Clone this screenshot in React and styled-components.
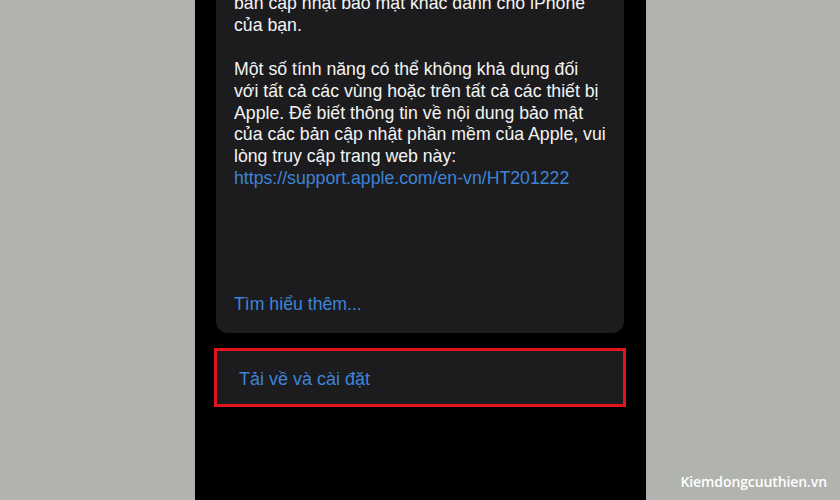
import React from 'react';
import styled, { createGlobalStyle } from 'styled-components';

const GlobalStyle = createGlobalStyle`
  html, body {
    margin: 0;
    padding: 0;
    background: #b1b3ae;
  }
  body {
    font-family: 'Liberation Sans', Arial, sans-serif;
  }
`;

const Page = styled.div`
  position: relative;
  width: 840px;
  height: 500px;
  background: #b1b3ae;
  display: flex;
  justify-content: center;
  overflow: hidden;
`;

const Screen = styled.div`
  width: 451px;
  height: 500px;
  margin-left: 1px;
  background: #000;
  display: flex;
  flex-direction: column;
  overflow: hidden;
`;

const Card = styled.div`
  margin: -20px 22px 0 21px;
  padding: 13px 18px 17px 18px;
  background: #1c1c1e;
  border-radius: 0 0 12px 12px;
  color: #f4f4f4;
  font-size: 17.7px;
  line-height: 21.9px;
`;

const Para = styled.p`
  margin: 0 0 21.9px 0;
  &:last-of-type {
    margin-bottom: 0;
  }
`;

const Link = styled.a`
  color: #3d84d8;
  text-decoration: none;
  display: block;
  margin-top: ${({ $gap }) => $gap || 0}px;
`;

const Action = styled.div`
  margin: 15px 20px 0 19px;
  height: 53px;
  border: 3px solid #e3151c;
  background: #1c1c1e;
  display: flex;
  align-items: center;
  padding: 3px 0 0 22px;
  color: #3d84d8;
  font-size: 18px;
  box-sizing: border-box;
  height: 59px;
`;

const Watermark = styled.div`
  position: absolute;
  right: 13px;
  bottom: 9px;
  color: #fff;
  font-family: 'Open Sans', sans-serif;
  font-weight: 600;
  font-size: 14px;
  letter-spacing: -0.1px;
`;

export default function App() {
  return (
    <Page>
      <GlobalStyle />
      <Screen>
        <Card>
          <Para>
            bản cập nhật bảo mật khác dành cho iPhone
            <br />
            của bạn.
          </Para>
          <Para>
            Một số tính năng có thể không khả dụng đối
            <br />
            với tất cả các vùng hoặc trên tất cả các thiết bị
            <br />
            Apple. Để biết thông tin về nội dung bảo mật
            <br />
            của các bản cập nhật phần mềm của Apple, vui
            <br />
            lòng truy cập trang web này:
            <br />
            <Link href="#">https://support.apple.com/en-vn/HT201222</Link>
          </Para>
          <Link href="#" $gap={104}>Tìm hiểu thêm...</Link>
        </Card>
        <Action>Tải về và cài đặt</Action>
      </Screen>
      <Watermark>Kiemdongcuuthien.vn</Watermark>
    </Page>
  );
}
